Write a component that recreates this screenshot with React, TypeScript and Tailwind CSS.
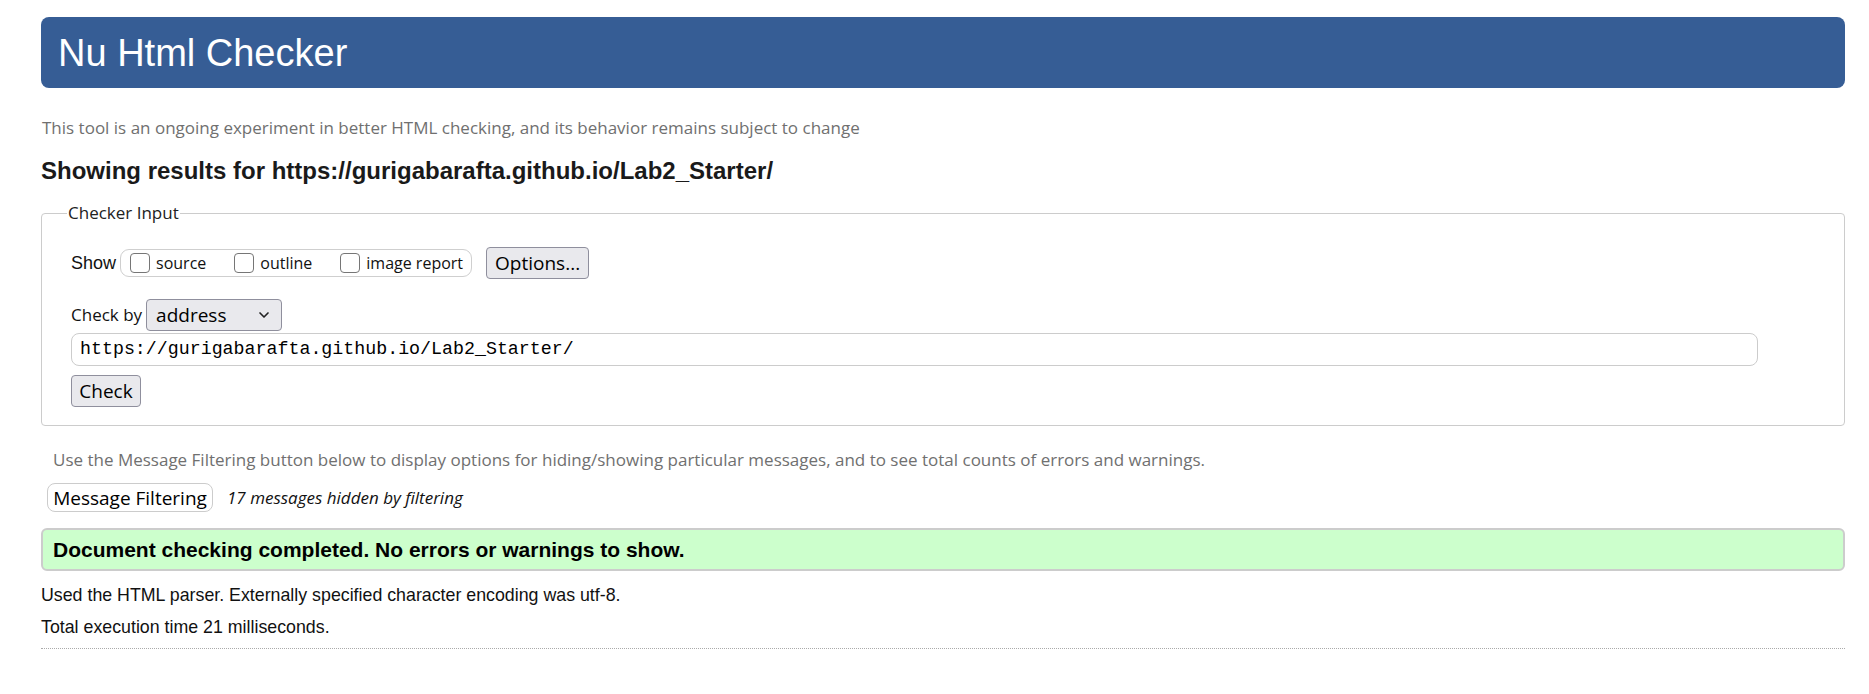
import { ChevronDown } from "lucide-react";

const ARIAL = "font-['Liberation_Sans',Arial,sans-serif]";
const HUMAN = "font-['Open_Sans','Noto_Sans',sans-serif]";
const MONO = "font-['Liberation_Mono','DejaVu_Sans_Mono',monospace]";

function Check({ label }: { label: string }) {
  return (
    <label className="flex items-center gap-[6px]">
      <input
        type="checkbox"
        className="appearance-none w-[20px] h-[20px] rounded-[4px] border border-[#767676] bg-white"
      />
      <span className={`${HUMAN} text-[16px] text-[#111]`}>{label}</span>
    </label>
  );
}

export default function App() {
  return (
    <div className="min-h-screen bg-white pl-[41px] pr-[24px] pt-[17px]">
      {/* Title bar */}
      <header className="h-[71px] bg-[#365d95] rounded-[8px] flex items-center pl-[17px]">
        <h1 className={`${ARIAL} text-[38px] text-white leading-none`}>Nu Html Checker</h1>
      </header>

      <p className={`${HUMAN} text-[#707070] text-[17px] leading-[22px] mt-[29px] ml-[1px]`}>
        This tool is an ongoing experiment in better HTML checking, and its behavior remains subject to change
      </p>

      <h2 className={`${ARIAL} font-bold text-[24px] text-[#1a1a1a] leading-[26px] mt-[19px]`}>
        Showing results for https://gurigabarafta.github.io/Lab2_Starter/
      </h2>

      {/* Checker input */}
      <fieldset className="mt-[17px] border border-[#cccccc] rounded-[4px] pl-[29px] pb-[18px] pt-[22px]">
        <legend className={`${HUMAN} text-[17px] text-[#222] leading-[24px] ml-[-4px] px-[1px]`}>Checker Input</legend>

        <div className="flex items-center">
          <span className={`${ARIAL} text-[18px] text-[#111] mr-[4px]`}>Show</span>
          <div className="h-[28px] flex items-center gap-[28px] border border-[#cfcfcf] rounded-[9px] pl-[9px] pr-[8px]">
            <Check label="source" />
            <Check label="outline" />
            <Check label="image report" />
          </div>
          <button
            className={`${HUMAN} ml-[14px] h-[32px] px-[8px] text-[19px] text-black bg-[#e9e9ed] border border-[#8f8f9d] rounded-[4px]`}
          >
            Options...
          </button>
        </div>

        <div className="flex items-center mt-[20px]">
          <span className={`${HUMAN} text-[17px] text-[#111] mr-[4px]`}>Check by</span>
          <div className="w-[136px] h-[32px] flex items-center justify-between bg-[#e9e9ed] border border-[#8f8f9d] rounded-[4px] pl-[9px] pr-[9px]">
            <span className={`${HUMAN} text-[19px] text-black`}>address</span>
            <ChevronDown size={16} strokeWidth={2.5} className="text-[#222]" />
          </div>
        </div>

        <div className="mt-[2px] mr-[86px] h-[33px] flex items-center border border-[#cccccc] rounded-[8px] pl-[8px]">
          <span className={`${MONO} text-[18.3px] text-black`}>https://gurigabarafta.github.io/Lab2_Starter/</span>
        </div>

        <button
          className={`${HUMAN} mt-[9px] h-[32px] w-[70px] text-[19px] text-black bg-[#e9e9ed] border border-[#8f8f9d] rounded-[4px]`}
        >
          Check
        </button>
      </fieldset>

      <p className={`${HUMAN} text-[#707070] text-[17px] leading-[22px] mt-[23px] ml-[12px]`}>
        Use the Message Filtering button below to display options for hiding/showing particular messages, and to see total counts of errors and warnings.
      </p>

      <div className="flex items-center mt-[12px] ml-[6px]">
        <button className={`${HUMAN} h-[29px] w-[166px] text-[19px] text-black bg-white border border-[#cccccc] rounded-[8px]`}>
          Message Filtering
        </button>
        <span className={`${HUMAN} italic text-[17px] text-[#111] ml-[14px]`}>17 messages hidden by filtering</span>
      </div>

      <div className="mt-[16px] h-[43px] flex items-center bg-[#ccffcc] border-2 border-[#cccccc] rounded-[6px] pl-[10px]">
        <p className={`${ARIAL} font-bold text-[21px] text-black`}>
          Document checking completed. No errors or warnings to show.
        </p>
      </div>

      <p className={`${ARIAL} text-[17.8px] text-[#111] leading-[30px] mt-[9px]`}>
        Used the HTML parser. Externally specified character encoding was utf-8.
      </p>
      <p className={`${ARIAL} text-[17.8px] text-[#111] leading-[30px] mt-[2px]`}>Total execution time 21 milliseconds.</p>

      <hr className="mt-[6px] border-0 border-t border-dotted border-[#aaaaaa]" />
    </div>
  );
}
